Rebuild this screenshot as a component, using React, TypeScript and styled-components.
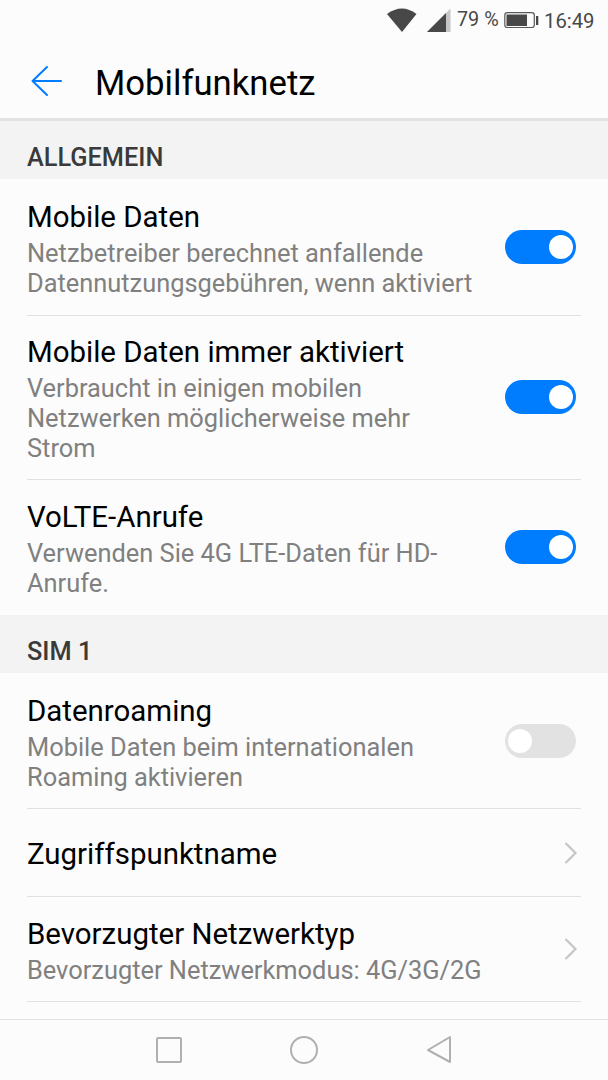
import React from 'react';
import styled, { createGlobalStyle } from 'styled-components';

const Global = createGlobalStyle`
  * { box-sizing: border-box; }
  body { margin: 0; background: #fcfcfc; font-family: Roboto, "Liberation Sans", sans-serif; }
`;
const Screen = styled.div`
  width: 608px; height: 1080px; overflow: hidden; background: #fcfcfc;
  display: flex; flex-direction: column;
`;
const StatusBar = styled.div`
  height: 40px; flex: none; display: flex; align-items: center; justify-content: flex-end;
  padding-right: 13px; color: #484848; font-size: 20px; line-height: 40px; white-space: nowrap;
  svg { display: block; flex: none; }
`;
const Percent = styled.span` width: 42px; margin: 0 5px 0 3px; font-size: 19.8px; `;
const Clock = styled.span` width: 51px; margin: 2px 0 0 5px; font-size: 20.3px; `;
const AppBar = styled.header`
  height: 81px; flex: none; display: flex; align-items: center; padding: 0 0 0 30px;
  border-bottom: 3px solid #e2e2e2;
  svg { margin-top: 3px; }
`;
const Title = styled.h1`
  margin: 8px 0 0 32px; font-size: 34.7px; line-height: 40px; font-weight: 400; color: #000;
`;
const SectionHeader = styled.h2`
  margin: 0; flex: none; height: 58px; background: #f3f3f3; padding: 0 27px 7px;
  display: flex; align-items: flex-end; font-size: 25.3px; line-height: 28px; font-weight: 500; color: #3a3a3a;
`;
const Row = styled.div<{ $height: number; $padTop?: number }>`
  height: ${p => p.$height}px; flex: none; margin: 0 27px; padding: ${p => p.$padTop ?? 0}px 5px 0 0;
  display: flex; align-items: center; justify-content: space-between;
  & + & { border-top: 1px solid #e0e0e0; }
`;
const RowText = styled.div<{ $single: boolean }>` padding-top: ${p => (p.$single ? 3 : 2)}px; `;
const RowTitle = styled.div` font-size: 29.45px; line-height: 37px; color: #000; white-space: nowrap; `;
const Summaries = styled.div` margin-top: 2px; `;
const Summary = styled.div` font-size: 25.4px; line-height: 30px; color: #808080; white-space: nowrap; `;
const Toggle = styled.div<{ $on: boolean }>`
  width: 71px; height: 34px; flex: none; margin-bottom: 1px; border-radius: 17px; padding: 5px 3px;
  display: flex; justify-content: ${p => (p.$on ? 'flex-end' : 'flex-start')};
  background: ${p => (p.$on ? '#007dff' : '#e2e2e2')};
`;
const Knob = styled.div` width: 24px; height: 24px; border-radius: 50%; background: #fff; `;
const NavBar = styled.nav`
  height: 61px; flex: none; margin-top: auto; border-top: 1px solid #e0e0e0; background: #fcfcfc;
  display: flex; align-items: center; justify-content: center;
`;
const ChevronIcon = styled.svg` flex: none; margin-right: -2px; `;

const Chevron = () => (
  <ChevronIcon width="14" height="22" viewBox="0 0 14 22" fill="none" stroke="#c6c6c6" strokeWidth="2.2"><path d="M1.5 1l10 10-10 10" /></ChevronIcon>
);

type Item = { title: string; lines?: string[]; on?: boolean; height: number; padTop?: number };
const Setting = ({ title, lines, on, height, padTop }: Item) => (
  <Row $height={height} $padTop={padTop}>
    <RowText $single={!lines}>
      <RowTitle>{title}</RowTitle>
      {lines && <Summaries>{lines.map(l => <Summary key={l}>{l}</Summary>)}</Summaries>}
    </RowText>
    {on === undefined ? <Chevron /> : <Toggle $on={on}><Knob /></Toggle>}
  </Row>
);

const general: Item[] = [
  { title: 'Mobile Daten', lines: ['Netzbetreiber berechnet anfallende', 'Datennutzungsgebühren, wenn aktiviert'], on: true, height: 136 },
  { title: 'Mobile Daten immer aktiviert', lines: ['Verbraucht in einigen mobilen', 'Netzwerken möglicherweise mehr', 'Strom'], on: true, height: 164 },
  { title: 'VoLTE-Anrufe', lines: ['Verwenden Sie 4G LTE-Daten für HD-', 'Anrufe.'], on: true, height: 136 },
];
const sim: Item[] = [
  { title: 'Datenroaming', lines: ['Mobile Daten beim internationalen', 'Roaming aktivieren'], on: false, height: 135, padTop: 2 },
  { title: 'Zugriffspunktname', height: 88 },
  { title: 'Bevorzugter Netzwerktyp', lines: ['Bevorzugter Netzwerkmodus: 4G/3G/2G'], height: 105 },
];

export default function App() {
  return (
    <Screen>
      <Global />
      <StatusBar>
        <svg width="70" height="40" viewBox="384 0 70 40">
          <path d="M387 14Q402 3 416.500 14L402 32Z" fill="#484848" />
          <path d="M450.500 8.500V32H427Z" fill="#c6c6c6" /><path d="M446 13V32H427Z" fill="#484848" />
        </svg>
        <Percent>79 %</Percent>
        <svg width="35" height="40" viewBox="504 0 35 40">
          <rect x="504.800" y="12.700" width="29.500" height="14.800" rx="2.500" fill="none" stroke="#585858" strokeWidth="1.2" />
          <path d="M506.500 14.500H527V26H506.500ZM536 16h2.300v9H536z" fill="#484848" />
        </svg>
        <Clock>16:49</Clock>
      </StatusBar>
      <AppBar>
        <svg width="33" height="32" viewBox="0 0 33 32" fill="none" stroke="#007dff" strokeWidth="2" strokeLinecap="round" strokeLinejoin="round"><path d="M31 16H2.500M17 2L2.500 16 17 30" /></svg>
        <Title>Mobilfunknetz</Title>
      </AppBar>
      <SectionHeader>ALLGEMEIN</SectionHeader>
      {general.map(i => <Setting key={i.title} {...i} />)}
      <SectionHeader>SIM 1</SectionHeader>
      {sim.map(i => <Setting key={i.title} {...i} />)}
      <Row $height={18} />
      <NavBar>
        <svg width="310" height="60" viewBox="149 1020 310 60" fill="none" stroke="#b0b0b0" strokeWidth="2">
          <rect x="157" y="1038" width="24" height="24" rx="1" /><circle cx="304" cy="1050" r="13" /><path d="M450 1037v25L428 1050Z" strokeLinejoin="round" />
        </svg>
      </NavBar>
    </Screen>
  );
}
